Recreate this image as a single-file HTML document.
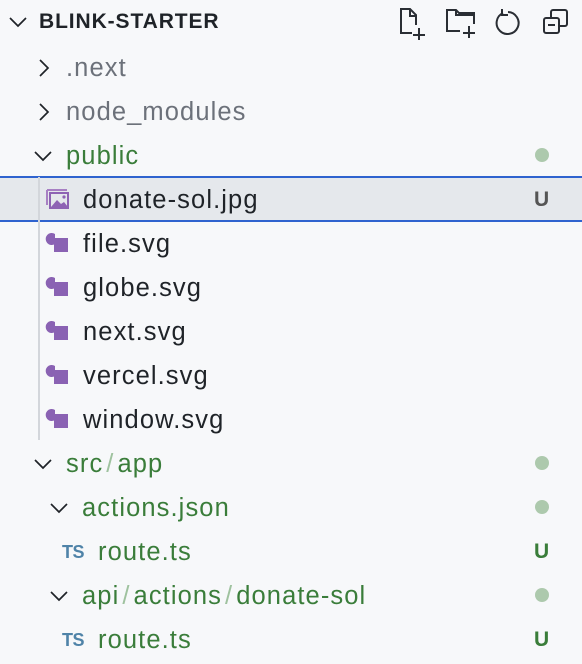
<!DOCTYPE html>
<html><head><style>
*{margin:0;padding:0;box-sizing:border-box}
body{width:582px;height:664px;background:#f7f8fa;font-family:"Liberation Sans",Arial,sans-serif;position:relative;overflow:hidden}
.r{position:absolute;left:0;width:582px;height:44px;font-size:25.5px;line-height:46px;color:#1f2328;white-space:nowrap;letter-spacing:1.1px}
.t{position:absolute;top:0}
.g{color:#3a7d3a}.gr{color:#6c717a}
.sl{color:#9fc29f;margin:0 3px}
.dot{position:absolute;left:535px;top:15px;width:14px;height:14px;border-radius:50%;background:#adc9ad}
.u{position:absolute;left:534px;top:0;font-weight:bold;font-size:21px;color:#3a7d3a;letter-spacing:0}
.chev{position:absolute;top:13px}
.ts{position:absolute;top:0;font-weight:bold;font-size:18px;color:#4f83a8;letter-spacing:-0.5px}
.sv{position:absolute;top:11px}
</style></head><body>
<div class="r" style="top:0"><svg class="chev" style="left:8px;top:12px" width="20" height="20" viewBox="0 0 20 20"><path d="M2 6l8 8 8-8" fill="none" stroke="#1f2328" stroke-width="1.7"/></svg><span class="t" style="left:39px;font-weight:bold;font-size:21px;letter-spacing:0.9px;line-height:44px">BLINK-STARTER</span>
<svg style="position:absolute;left:398px;top:8px" width="32" height="32" viewBox="0 0 32 32" fill="none" stroke="#2a2e34" stroke-width="2"><path d="M14 25H3V1h9l6 6v10M12 1v7h6M21 20v12M15 27h12"/></svg>
<svg style="position:absolute;left:445px;top:8px" width="34" height="32" viewBox="0 0 34 32" fill="none" stroke="#2a2e34" stroke-width="2"><path d="M15 23H2V2h9l3 3h15v11M11 2v5h18M24 18v12M18 25h12"/></svg>
<svg style="position:absolute;left:495px;top:9px" width="26" height="26" viewBox="0 0 26 26" fill="none" stroke="#2a2e34" stroke-width="2"><path d="M8 4a11 11 0 1 0 5-1M7 0v6h6"/></svg>
<svg style="position:absolute;left:543px;top:9px" width="26" height="26" viewBox="0 0 26 26" fill="none" stroke="#2a2e34" stroke-width="2"><rect x="1" y="9" width="15" height="15" rx="2"/><path d="M8 9V3a2 2 0 0 1 2-2h12a2 2 0 0 1 2 2v12a2 2 0 0 1-2 2h-6M5 16h7"/></svg>
</div>
<div class="r" style="top:45px"><svg class="chev" style="left:34px" width="20" height="20" viewBox="0 0 20 20"><path d="M6 2l8 8-8 8" fill="none" stroke="#1f2328" stroke-width="1.7"/></svg><span class="t gr" style="left:66px">.next</span></div>
<div class="r" style="top:89px"><svg class="chev" style="left:34px" width="20" height="20" viewBox="0 0 20 20"><path d="M6 2l8 8-8 8" fill="none" stroke="#1f2328" stroke-width="1.7"/></svg><span class="t gr" style="left:66px">node_modules</span></div>
<div class="r" style="top:133px"><svg class="chev" style="left:33px" width="20" height="20" viewBox="0 0 20 20"><path d="M2 6l8 8 8-8" fill="none" stroke="#1f2328" stroke-width="1.7"/></svg><span class="t g" style="left:66px">public</span><div class="dot"></div></div>
<div style="position:absolute;left:0;top:176px;width:582px;height:46px;background:#e5e8ec;border-top:2px solid #2f63cf;border-bottom:2px solid #2f63cf"></div>
<div style="position:absolute;left:38px;top:177px;width:2px;height:263px;background:#d3d6db"></div>
<div class="r" style="top:177px"><svg class="sv" style="left:46px;top:12px" width="24" height="20" viewBox="0 0 24 20"><path d="M1 1v15M1 1h20" stroke="#a77fc3" stroke-width="2" fill="none"/><rect x="4" y="4" width="18" height="15" fill="none" stroke="#8e63b4" stroke-width="2"/><path d="M5 18l6-7 4 4 3-2 4 5z" fill="#8e63b4"/><circle cx="18" cy="8" r="1.6" fill="#8e63b4"/></svg><span class="t" style="left:83px">donate-sol.jpg</span><span class="u" style="color:#555">U</span></div>
<div class="r" style="top:221px"><svg class="sv" style="left:45px" width="24" height="22" viewBox="0 0 24 22"><path d="M10 2a6 6 0 1 0 0 10z" fill="#8a62b3"/><rect x="9" y="6" width="14" height="14" fill="#8a62b3"/></svg><span class="t" style="left:83px">file.svg</span></div>
<div class="r" style="top:265px"><svg class="sv" style="left:45px" width="24" height="22" viewBox="0 0 24 22"><path d="M10 2a6 6 0 1 0 0 10z" fill="#8a62b3"/><rect x="9" y="6" width="14" height="14" fill="#8a62b3"/></svg><span class="t" style="left:83px">globe.svg</span></div>
<div class="r" style="top:309px"><svg class="sv" style="left:45px" width="24" height="22" viewBox="0 0 24 22"><path d="M10 2a6 6 0 1 0 0 10z" fill="#8a62b3"/><rect x="9" y="6" width="14" height="14" fill="#8a62b3"/></svg><span class="t" style="left:83px">next.svg</span></div>
<div class="r" style="top:353px"><svg class="sv" style="left:45px" width="24" height="22" viewBox="0 0 24 22"><path d="M10 2a6 6 0 1 0 0 10z" fill="#8a62b3"/><rect x="9" y="6" width="14" height="14" fill="#8a62b3"/></svg><span class="t" style="left:83px">vercel.svg</span></div>
<div class="r" style="top:397px"><svg class="sv" style="left:45px" width="24" height="22" viewBox="0 0 24 22"><path d="M10 2a6 6 0 1 0 0 10z" fill="#8a62b3"/><rect x="9" y="6" width="14" height="14" fill="#8a62b3"/></svg><span class="t" style="left:83px">window.svg</span></div>
<div class="r" style="top:441px"><svg class="chev" style="left:33px" width="20" height="20" viewBox="0 0 20 20"><path d="M2 6l8 8 8-8" fill="none" stroke="#1f2328" stroke-width="1.7"/></svg><span class="t g" style="left:66px">src<span class="sl">/</span>app</span><div class="dot"></div></div>
<div class="r" style="top:485px"><svg class="chev" style="left:49px" width="20" height="20" viewBox="0 0 20 20"><path d="M2 6l8 8 8-8" fill="none" stroke="#1f2328" stroke-width="1.7"/></svg><span class="t g" style="left:82px">actions.json</span><div class="dot"></div></div>
<div class="r" style="top:529px"><span class="ts" style="left:62px">TS</span><span class="t g" style="left:98px">route.ts</span><span class="u">U</span></div>
<div class="r" style="top:573px"><svg class="chev" style="left:49px" width="20" height="20" viewBox="0 0 20 20"><path d="M2 6l8 8 8-8" fill="none" stroke="#1f2328" stroke-width="1.7"/></svg><span class="t g" style="left:82px">api<span class="sl">/</span>actions<span class="sl">/</span>donate-sol</span><div class="dot"></div></div>
<div class="r" style="top:617px"><span class="ts" style="left:62px">TS</span><span class="t g" style="left:98px">route.ts</span><span class="u">U</span></div>
</body></html>
